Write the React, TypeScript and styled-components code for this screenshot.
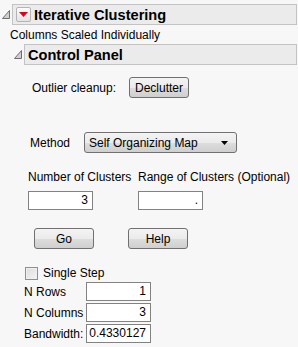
import React from 'react';
import styled, { createGlobalStyle } from 'styled-components';

const GlobalStyle = createGlobalStyle`
  html, body {
    margin: 0;
    padding: 0;
    background: #f7f7f7;
  }
  body {
    font-family: "Liberation Sans", Arial, sans-serif;
    font-size: 12px;
    line-height: 14px;
    color: #000;
  }
`;

const Page = styled.div`
  width: 298px;
  height: 347px;
  padding-top: 4px;
  box-sizing: border-box;
  overflow: hidden;
`;

const OutlineRow = styled.div<{ indent: number }>`
  display: flex;
  align-items: center;
  gap: 2px;
  margin-left: ${({ indent }) => indent}px;
  margin-right: 1px;
`;

const TitleBox = styled.div`
  flex: 1;
  height: 19px;
  display: flex;
  align-items: center;
  gap: 3px;
  padding-left: 3px;
  background: #ebebeb;
  border: 1px solid #c3c3c3;
`;

const TitleText = styled.span`
  font-weight: bold;
  font-size: 14.6px;
`;

const RedButton = styled.div`
  width: 13px;
  height: 13px;
  border: 1px solid #b4b4b4;
  border-radius: 2px;
  background: linear-gradient(#fbfbfb, #e4e4e4);
  display: flex;
  align-items: center;
  justify-content: center;
`;

const Subtitle = styled.div`
  margin: 3px 0 2px 10px;
  height: 14px;
`;

const Content = styled.div`
  padding-top: 12px;
`;

const Row = styled.div<{ left: number; gap?: number; top?: number }>`
  display: flex;
  align-items: center;
  margin-left: ${({ left }) => left}px;
  margin-top: ${({ top }) => top ?? 0}px;
  gap: ${({ gap }) => gap ?? 0}px;
`;

const Label = styled.span<{ w?: number }>`
  display: inline-block;
  width: ${({ w }) => (w ? `${w}px` : 'auto')};
  white-space: nowrap;
`;

const Button = styled.button<{ w: number }>`
  width: ${({ w }) => w}px;
  height: 21px;
  padding: 0;
  font-family: inherit;
  font-size: 12px;
  color: #000;
  border: 1px solid #707070;
  border-radius: 3px;
  background: linear-gradient(#f3f3f3 0%, #ebebeb 50%, #dddddd 51%, #cfcfcf 100%);
  box-sizing: border-box;
`;

const Select = styled.div`
  width: 153px;
  height: 21px;
  box-sizing: border-box;
  border: 1px solid #707070;
  border-radius: 3px;
  background: linear-gradient(#f3f3f3 0%, #ebebeb 50%, #dddddd 51%, #cfcfcf 100%);
  display: flex;
  align-items: center;
  justify-content: space-between;
  padding: 0 8px 0 4px;
`;

const ColGroup = styled.div<{ w: number }>`
  display: flex;
  flex-direction: column;
  gap: 7px;
  width: ${({ w }) => w}px;
`;

const Field = styled.div`
  width: 65px;
  height: 19px;
  box-sizing: border-box;
  border: 1px solid #828282;
  background: #fff;
  text-align: right;
  padding-right: 4px;
  line-height: 17px;
`;

const Check = styled.div`
  width: 11px;
  height: 11px;
  border: 1px solid #8e8f8f;
  background: linear-gradient(135deg, #dcdcdc, #f4f4f4);
  box-shadow: inset 0 0 0 1px #f0f0f0;
`;

const ParamGrid = styled.div`
  display: grid;
  grid-template-columns: 62px 65px;
  row-gap: 2px;
  margin-left: 24px;
  margin-top: 2px;
  align-items: center;
`;

const Disclosure = () => (
  <svg width="8" height="9" viewBox="0 0 8 9">
    <path d="M7.5 0.5 L7.5 8.5 L0.5 8.5 Z" fill="#d0d0d0" stroke="#6e6e6e" strokeWidth="1" />
  </svg>
);

const App = () => (
  <Page>
    <GlobalStyle />
    <OutlineRow indent={2}>
      <Disclosure />
      <TitleBox>
        <RedButton>
          <svg width="9" height="5" viewBox="0 0 9 5">
            <path d="M0 0 L9 0 L4.5 5 Z" fill="#e0001b" />
          </svg>
        </RedButton>
        <TitleText>Iterative Clustering</TitleText>
      </TitleBox>
    </OutlineRow>
    <Subtitle>Columns Scaled Individually</Subtitle>
    <OutlineRow indent={14}>
      <Disclosure />
      <TitleBox>
        <TitleText>Control Panel</TitleText>
      </TitleBox>
    </OutlineRow>
    <Content>
      <Row left={32}>
        <Label w={97}>Outlier cleanup:</Label>
        <Button w={60}>Declutter</Button>
      </Row>
      <Row left={30} top={34}>
        <Label w={54}>Method</Label>
        <Select>
          <span>Self Organizing Map</span>
          <svg width="7" height="4" viewBox="0 0 7 4">
            <path d="M0 0 L7 0 L3.5 4 Z" fill="#000" />
          </svg>
        </Select>
      </Row>
      <Row left={28} top={17}>
        <ColGroup w={110}>
          <Label>Number of Clusters</Label>
          <Field>3</Field>
        </ColGroup>
        <ColGroup w={150}>
          <Label>Range of Clusters (Optional)</Label>
          <Field>.</Field>
        </ColGroup>
      </Row>
      <Row left={34} top={18} gap={34}>
        <Button w={60}>Go</Button>
        <Button w={60}>Help</Button>
      </Row>
      <Row left={25} top={17} gap={5}>
        <Check />
        <Label>Single Step</Label>
      </Row>
      <ParamGrid>
        <Label>N Rows</Label>
        <Field>1</Field>
        <Label>N Columns</Label>
        <Field>3</Field>
        <Label>Bandwidth:</Label>
        <Field>0.4330127</Field>
      </ParamGrid>
    </Content>
  </Page>
);

export default App;
